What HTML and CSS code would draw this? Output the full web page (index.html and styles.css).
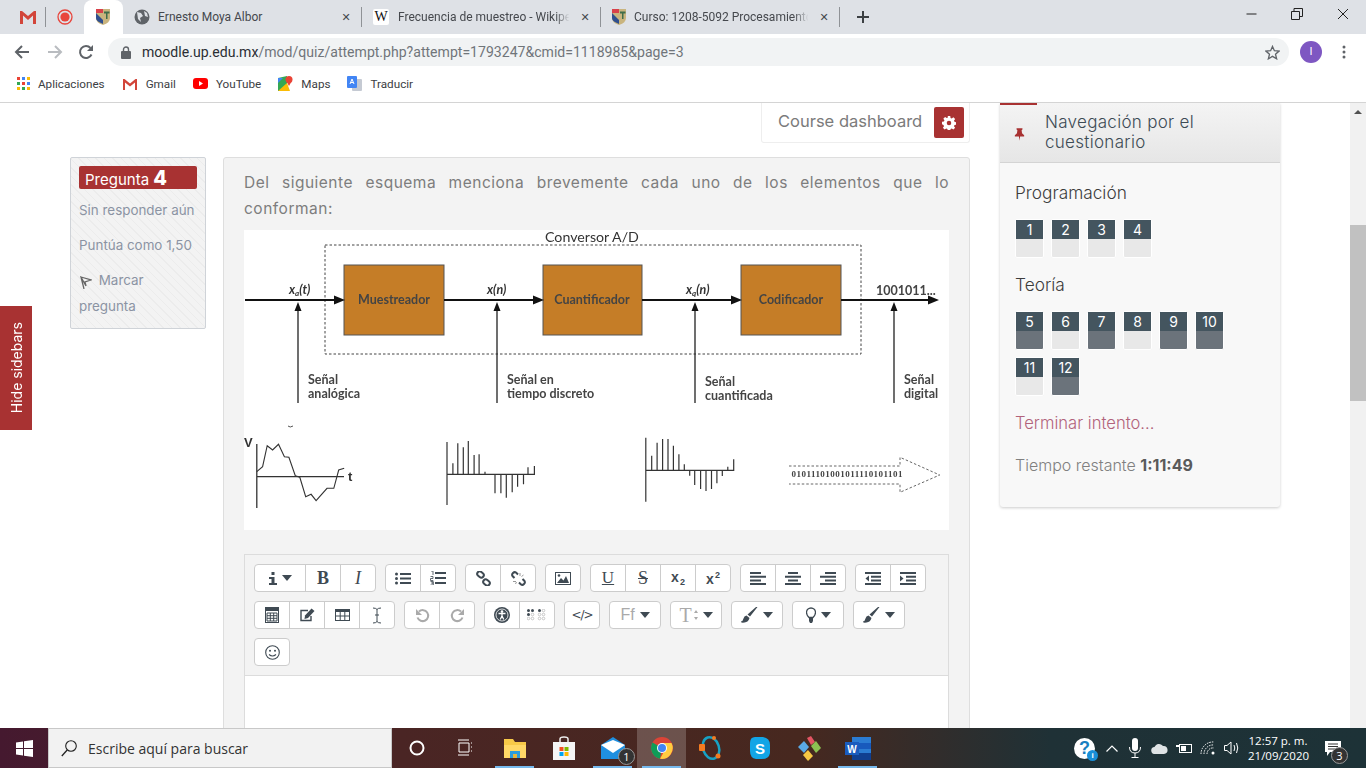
FILE: index.html
```html
<!DOCTYPE html>
<html lang="es">
<head>
    <meta charset="UTF-8">
    <title>Moodle quiz attempt</title>
    <link rel="stylesheet" href="styles.css">
</head>
<body>

    <!-- Browser tabs -->
    <div class="tabbar">
        <div class="tab pinned">
            <svg width="18" height="14" viewBox="0 0 18 14"><path d="M1 14V1h2l6 5 6-5h2v13h-3V5.500L9 10 4 5.500V14z" fill="#d2453a"/></svg>
        </div>
        <div class="tab pinned rec">
            <svg width="16" height="16" viewBox="0 0 16 16"><circle cx="8" cy="8" r="7" fill="none" stroke="#e8453c" stroke-width="1.300"/><circle cx="8" cy="8" r="4.600" fill="#e8453c"/></svg>
        </div>
        <div class="tab active">
            <svg width="14" height="16" viewBox="0 0 14 16"><path d="M0 0h14v9q0 5-7 7-7-2-7-7z" fill="#c9b47e"/><path d="M0 0h7v4H0z" fill="#d8414a"/><path d="M0 4l7 7v4L5 14Q0 12 0 9z" fill="#2f4f8f"/><path d="M10 4h1.500v6H10zM8 2.500h5.500V4.500H8z" fill="#3f6d4a"/></svg>
        </div>
        <div class="tab">
            <svg class="favicon" width="16" height="16" viewBox="0 0 16 16"><circle cx="8" cy="8" r="7.500" fill="#5f6368"/><path d="M3 3l4 1 2 3-3 2 1 4-3-3zM10 2l3 2 1 4-3-1z" fill="#dee1e6"/></svg>
            <span class="tab-title">Ernesto Moya Albor</span>
            <span class="tab-close">✕</span>
        </div>
        <div class="tab">
            <span class="favicon wiki">W</span>
            <span class="tab-title fade">Frecuencia de muestreo - Wikipe</span>
            <span class="tab-close">✕</span>
        </div>
        <div class="tab">
            <svg class="favicon" width="14" height="16" viewBox="0 0 14 16"><path d="M0 0h14v9q0 5-7 7-7-2-7-7z" fill="#c9b47e"/><path d="M0 0h7v4H0z" fill="#d8414a"/><path d="M0 4l7 7v4L5 14Q0 12 0 9z" fill="#2f4f8f"/><path d="M10 4h1.500v6H10zM8 2.500h5.500V4.500H8z" fill="#3f6d4a"/></svg>
            <span class="tab-title fade">Curso: 1208-5092 Procesamiento</span>
            <span class="tab-close">✕</span>
        </div>
        <div class="new-tab">
            <svg width="12" height="12" viewBox="0 0 12 12"><path d="M6 0v12M0 6h12" stroke="#3c4043" stroke-width="2"/></svg>
        </div>
        <div class="window-controls">
            <svg width="12" height="12" viewBox="0 0 12 12"><path d="M1.500 6h10" stroke="#222" stroke-width="1"/></svg>
            <svg width="12" height="12" viewBox="0 0 12 12"><path d="M.5 3.500h8v8h-8zM3 3.500V.5h8.500v8H8.500" fill="none" stroke="#222"/></svg>
            <svg width="12" height="12" viewBox="0 0 12 12"><path d="M1 1l10 10M11 1L1 11" stroke="#222"/></svg>
        </div>
    </div>

    <!-- Address bar -->
    <div class="toolbar">
        <svg class="nav" width="16" height="16" viewBox="0 0 16 16"><path d="M15 8H2M8 2L2 8l6 6" fill="none" stroke="#5f6368" stroke-width="2"/></svg>
        <svg class="nav" width="16" height="16" viewBox="0 0 16 16"><path d="M1 8h13M8 2l6 6-6 6" fill="none" stroke="#b9bcc0" stroke-width="2"/></svg>
        <svg class="nav" width="16" height="16" viewBox="0 0 16 16"><path d="M13.500 10.500A6 6 0 1 1 12.500 4" fill="none" stroke="#5f6368" stroke-width="2"/><path d="M15 1v6H9z" fill="#5f6368"/></svg>
        <div class="omnibox">
            <svg width="10" height="13" viewBox="0 0 10 13"><path d="M2.500 5V3.500a2.500 2.500 0 0 1 5 0V5" fill="none" stroke="#5f6368" stroke-width="1.400"/><rect y="5" width="10" height="8" rx="1" fill="#5f6368"/></svg>
            <span class="url"><b>moodle.up.edu.mx</b>/mod/quiz/attempt.php?attempt=1793247&amp;cmid=1118985&amp;page=3</span>
            <svg class="star" width="15" height="15" viewBox="0 0 16 16"><path d="M8 1.500l2 4.600 5 .4-3.800 3.300 1.200 4.900L8 12.100l-4.400 2.600 1.200-4.900L1 6.500l5-.4z" fill="none" stroke="#5f6368" stroke-width="1.400"/></svg>
        </div>
        <span class="avatar">I</span>
        <svg class="menu-dots" width="4" height="14" viewBox="0 0 4 14"><circle cx="2" cy="2" r="1.500" fill="#5f6368"/><circle cx="2" cy="7" r="1.500" fill="#5f6368"/><circle cx="2" cy="12" r="1.500" fill="#5f6368"/></svg>
    </div>

    <!-- Bookmarks -->
    <div class="bookmarks">
        <a class="mark">
            <svg width="13" height="13" viewBox="0 0 13 13"><path d="M0 0h3v3H0z" fill="#ea4335"/><path d="M5 0h3v3H5z" fill="#4285f4"/><path d="M10 0h3v3h-3z" fill="#fbbc05"/><path d="M0 5h3v3H0z" fill="#34a853"/><path d="M5 5h3v3H5z" fill="#ea4335"/><path d="M10 5h3v3h-3z" fill="#4285f4"/><path d="M0 10h3v3H0z" fill="#fbbc05"/><path d="M5 10h3v3H5z" fill="#34a853"/><path d="M10 10h3v3h-3z" fill="#fbbc05"/></svg>
            Aplicaciones
        </a>
        <a class="mark">
            <svg width="16" height="12" viewBox="0 0 16 12"><path d="M1 12V1h1.500L8 5.500 13.500 1H15v11h-2V4.500L8 8.500l-5-4V12z" fill="#d2453a"/></svg>
            Gmail
        </a>
        <a class="mark">
            <svg width="15" height="11" viewBox="0 0 15 11"><rect width="15" height="11" rx="3" fill="#f00"/><path d="M6 3l4 2.500L6 8z" fill="#fff"/></svg>
            YouTube
        </a>
        <a class="mark">
            <svg width="15" height="15" viewBox="0 0 15 15"><path d="M0 2l9-2v15H0z" fill="#34a853"/><path d="M0 15l9-8 3 8z" fill="#fbbc05"/><path d="M0 2h5L0 7z" fill="#4285f4"/><circle cx="11" cy="3.500" r="3.500" fill="#ea4335"/><path d="M8.500 5.500L11 10l2.500-4.500z" fill="#ea4335"/></svg>
            Maps
        </a>
        <a class="mark">
            <svg width="15" height="15" viewBox="0 0 15 15"><rect x="5" y="3" width="10" height="12" rx="1" fill="#c5cad3"/><rect width="10" height="12" rx="1" fill="#4285f4"/><path d="M3 8l2-5 2 5M3.800 6.500h2.400" fill="none" stroke="#fff"/></svg>
            Traducir
        </a>
    </div>

    <!-- Moodle page -->
    <div class="viewport">
        <div class="page">
            <div class="page-main">
                <div class="dashboard-row">
                    <div class="dashboard">
                        <span>Course dashboard</span>
                        <span class="gear-btn">
                            <svg width="14" height="14" viewBox="0 0 16 16"><path d="M6.600 0h2.800l.4 2.200 1.300.6 1.900-1.300 2 2-1.300 1.900.6 1.300 2.200.4v2.800l-2.200.4-.6 1.300 1.300 1.900-2 2-1.900-1.300-1.300.6-.4 2.200H6.600l-.4-2.200-1.300-.6-1.900 1.300-2-2 1.300-1.900-.6-1.300L0 9.400V6.600l2.200-.4.6-1.300-1.300-1.900 2-2 1.900 1.300 1.300-.6z" fill="#fff"/><circle cx="8" cy="8" r="2.600" fill="#a83232"/></svg>
                        </span>
                    </div>
                </div>
                <div class="question">
                    <div class="info">
                        <h3 class="qno">Pregunta <b>4</b></h3>
                        <p>Sin responder aún</p>
                        <p>Puntúa como 1,50</p>
                        <p class="flag">
                            <svg width="12" height="14" viewBox="0 0 12 14"><path d="M1 2l10 3-6 2 1 4zM1 2l3 12" fill="none" stroke="#666" stroke-width="1.300"/></svg>
                            Marcar pregunta
                        </p>
                    </div>
                    <div class="content">
                        <p class="qtext">Del siguiente esquema menciona brevemente cada uno de los elementos que lo conforman:</p>

                        <svg class="diagram" width="705" height="300" viewBox="0 0 705 300">
                            <rect x="81" y="15" width="536" height="109" fill="none" stroke="#444" stroke-dasharray="2.500 2"/>
                            <text class="lbl title" x="301" y="12">Conversor A/D</text>

                            <rect class="block" x="100" y="35" width="100" height="70"/>
                            <rect class="block" x="299" y="35" width="99" height="70"/>
                            <rect class="block" x="497" y="35" width="100" height="70"/>
                            <text class="lbl bold" x="150" y="74" text-anchor="middle">Muestreador</text>
                            <text class="lbl bold" x="348" y="74" text-anchor="middle">Cuantificador</text>
                            <text class="lbl bold" x="547" y="74" text-anchor="middle">Codificador</text>

                            <!-- signal line and the arrows into it -->
                            <path d="M1 70h94M200 70h93M398 70h93M597 70h92" stroke="#111" stroke-width="2" fill="none"/>
                            <path d="M90 65.500l11 4.500-11 4.500zM289 65.500l11 4.500-11 4.500zM487 65.500l11 4.500-11 4.500zM684 65.500l11 4.500-11 4.500z" fill="#111"/>
                            <path d="M54 79v94M253 79v94M451 79v94M650 79v94" stroke="#222" stroke-width="1.300" fill="none"/>
                            <path d="M50.500 81l3.500-9 3.500 9zM249.500 81l3.500-9 3.500 9zM447.500 81l3.500-9 3.500 9zM646.500 81l3.500-9 3.500 9z" fill="#111"/>

                            <text class="lbl it" x="45" y="64">x<tspan font-size="8" dy="2">a</tspan><tspan dy="-2">(t)</tspan></text>
                            <text class="lbl it" x="243" y="64">x(n)</text>
                            <text class="lbl it" x="442" y="64">x<tspan font-size="8" dy="2">q</tspan><tspan dy="-2">(n)</tspan></text>
                            <text class="lbl bold" x="632" y="65">1001011...</text>

                            <text class="lbl bold" x="64" y="154">Señal</text>
                            <text class="lbl bold" x="64" y="168">analógica</text>
                            <text class="lbl bold" x="263" y="154">Señal en</text>
                            <text class="lbl bold" x="263" y="168">tiempo discreto</text>
                            <text class="lbl bold" x="461" y="156">Señal</text>
                            <text class="lbl bold" x="461" y="170">cuantificada</text>
                            <text class="lbl bold" x="660" y="154">Señal</text>
                            <text class="lbl bold" x="660" y="168">digital</text>

                            <!-- analog waveform -->
                            <path d="M44 196q2 2 5 0" fill="none" stroke="#555"/>
                            <path d="M12.800 214v64M12.800 246.700H100" stroke="#333" stroke-width="1.300" fill="none"/>
                            <polyline points="12.800,241.700 18.600,236.700 23.200,215.700 28.600,220 34.500,214.300 40.400,226.700 44.900,227.300 51.300,245.700 55.800,247.300 61.700,266.700 67.100,264.300 72.100,270.700 83,258.300 89.800,258.300 94.700,240 100.200,238.300" fill="none" stroke="#333" stroke-width="1.100"/>
                            <text class="axis" x="0" y="217">V</text>
                            <text class="axis" x="104" y="251">t</text>

                            <!-- sampled signal -->
                            <path d="M203 212v63M203 244.300H290.400V236M208.900 244.300V233.300M213.800 244.300V213.300M219.300 244.300V217.300M224.300 244.300V211M230.100 244.300V225M235.100 244.300V224.300M241 244.300V241.700M251 244.300V263.300M256.900 244.300V263.300M262.300 244.300V267.700M268.200 244.300V262.300M273.600 244.300V256.700M279.500 244.300V254.300M284 244.300V237.300" fill="none" stroke="#333" stroke-width="1.200"/>

                            <!-- quantized signal -->
                            <path d="M401.800 207.700v64M401.800 240.300H489.700V229.300M407.700 240.300V225.700M413.100 240.300V212.700M418.600 240.300V209M424 240.300V209M429.400 240.300V215.700M434.900 240.300V224.300M440.300 240.300V234.300M445.700 240.300V245.700M450.700 240.300V255M456.600 240.300V259M462 240.300V261M467.500 240.300V259M472.900 240.300V253.300M478.300 240.300V246M483.800 240.300V236.700" fill="none" stroke="#333" stroke-width="1.200"/>

                            <!-- bit stream arrow -->
                            <path d="M545 236H656V227.300L695.700 245 656 262.300V254H545" fill="none" stroke="#666" stroke-dasharray="2.500 2"/>
                            <text class="bits" x="547.500" y="247" textLength="111">01011101001011110101101</text>
                        </svg>

                        <div class="editor">
                            <div class="editor-tools">
                                <div class="tool-row">
                                    <div class="group">
                                        <span class="btn drop">
                                            <svg width="8" height="13" viewBox="0 0 8 13"><path d="M2.500 0h3v3h-3zM0 5h5.500v6H8v2H0v-2h2.500V7H0z" fill="#3f4a53"/></svg>
                                            <i class="caret"></i>
                                        </span>
                                        <span class="btn"><span class="serif bold">B</span></span>
                                        <span class="btn"><span class="serif ital">I</span></span>
                                    </div>
                                    <div class="group">
                                        <span class="btn">
                                            <svg width="16" height="13" viewBox="0 0 16 13"><path d="M5 1h11v2H5zM5 5.500h11v2H5zM5 10h11v2H5z" fill="#3f4a53"/><circle cx="1.500" cy="2" r="1.500" fill="#3f4a53"/><circle cx="1.500" cy="6.500" r="1.500" fill="#3f4a53"/><circle cx="1.500" cy="11" r="1.500" fill="#3f4a53"/></svg>
                                        </span>
                                        <span class="btn">
                                            <svg width="16" height="14" viewBox="0 0 16 14"><path d="M5 1h11v2H5zM5 6h11v2H5zM5 11h11v2H5z" fill="#3f4a53"/><path d="M1 0h2v4M.5 5.500h2.500v2H.5v2h2.800M.5 10.500h2.800v1.500H1.500h1.800v2H.5" fill="none" stroke="#3f4a53" stroke-width=".8"/></svg>
                                        </span>
                                    </div>
                                    <div class="group">
                                        <span class="btn">
                                            <svg width="15" height="15" viewBox="0 0 15 15"><g fill="none" stroke="#3f4a53" stroke-width="2"><rect x="1" y="1" width="7" height="5" rx="2.500" transform="rotate(40 4.500 3.500)"/><rect x="7" y="9" width="7" height="5" rx="2.500" transform="rotate(40 10.500 11.500)"/></g></svg>
                                        </span>
                                        <span class="btn">
                                            <svg width="15" height="15" viewBox="0 0 15 15"><g fill="none" stroke="#3f4a53" stroke-width="2"><path d="M7 3.500L5 1.500Q3.500.5 2 2T1.500 5L3.500 7"/><path d="M8 11.500l2 2q1.500 1 3-.5t.5-3L11.500 8"/></g><path d="M9 2v3M12.500 4l-2 1.500M2 10.500h3M4.500 13l1-2" stroke="#999"/></svg>
                                        </span>
                                    </div>
                                    <div class="group">
                                        <span class="btn">
                                            <svg width="16" height="13" viewBox="0 0 16 13"><rect x=".5" y=".5" width="15" height="12" fill="none" stroke="#3f4a53"/><path d="M2 11l4-5 2.500 2.500L11 4l3 7z" fill="#3f4a53"/><circle cx="4" cy="3.500" r="1.300" fill="#3f4a53"/></svg>
                                        </span>
                                    </div>
                                    <div class="group">
                                        <span class="btn"><span class="serif under">U</span></span>
                                        <span class="btn"><span class="serif strike">S</span></span>
                                        <span class="btn"><span class="sub-sup">x<sub>2</sub></span></span>
                                        <span class="btn"><span class="sub-sup">x<sup>2</sup></span></span>
                                    </div>
                                    <div class="group">
                                        <span class="btn">
                                            <svg width="16" height="13" viewBox="0 0 16 13"><path d="M0 0h11v2H0zM0 3.700h16v2H0zM0 7.400h11v2H0zM0 11h16v2H0z" fill="#3f4a53"/></svg>
                                        </span>
                                        <span class="btn">
                                            <svg width="16" height="13" viewBox="0 0 16 13"><path d="M3 0h10v2H3zM0 3.700h16v2H0zM3 7.400h10v2H3zM0 11h16v2H0z" fill="#3f4a53"/></svg>
                                        </span>
                                        <span class="btn">
                                            <svg width="16" height="13" viewBox="0 0 16 13"><path d="M5 0h11v2H5zM0 3.700h16v2H0zM5 7.400h11v2H5zM0 11h16v2H0z" fill="#3f4a53"/></svg>
                                        </span>
                                    </div>
                                    <div class="group">
                                        <span class="btn">
                                            <svg width="16" height="13" viewBox="0 0 16 13"><path d="M0 0h16v2H0zM6 3.700h10v2H6zM6 7.400h10v2H6zM0 11h16v2H0z" fill="#3f4a53"/><path d="M4 3.500v6l-3.500-3z" fill="#3f4a53"/></svg>
                                        </span>
                                        <span class="btn">
                                            <svg width="16" height="13" viewBox="0 0 16 13"><path d="M0 0h16v2H0zM6 3.700h10v2H6zM6 7.400h10v2H6zM0 11h16v2H0z" fill="#3f4a53"/><path d="M0 3.500v6l3.500-3z" fill="#3f4a53"/></svg>
                                        </span>
                                    </div>
                                </div>
                                <div class="tool-row">
                                    <div class="group">
                                        <span class="btn">
                                            <svg width="14" height="16" viewBox="0 0 14 16"><rect x=".5" y=".5" width="13" height="15" fill="none" stroke="#3f4a53"/><path d="M0 0h14v4H0z" fill="#3f4a53"/><path d="M2 6h10v8H2zM5.300 6v8M8.700 6v8M2 8.700h10M2 11.300h10" fill="none" stroke="#3f4a53"/></svg>
                                        </span>
                                        <span class="btn">
                                            <svg width="15" height="14" viewBox="0 0 15 14"><path d="M11 8v4.500H1v-10h7" fill="none" stroke="#3f4a53" stroke-width="1.400"/><path d="M5 7.500L11.500.5l3 2.500L8 10l-3.500 1z" fill="#3f4a53"/></svg>
                                        </span>
                                        <span class="btn">
                                            <svg width="15" height="12" viewBox="0 0 15 12"><rect x=".5" y=".5" width="14" height="11" fill="none" stroke="#3f4a53"/><path d="M0 0h15v3H0z" fill="#3f4a53"/><path d="M5.200 3v9M9.800 3v9M0 7h15" stroke="#3f4a53"/></svg>
                                        </span>
                                        <span class="btn">
                                            <svg width="10" height="17" viewBox="0 0 10 17"><path d="M1 1q3 0 4 1.500Q6 1 9 1M1 16q3 0 4-1.500Q6 16 9 16M5 2.500v12M3 8h4" fill="none" stroke="#3f4a53"/></svg>
                                        </span>
                                    </div>
                                    <div class="group">
                                        <span class="btn">
                                            <svg width="15" height="15" viewBox="0 0 15 15"><path d="M4 3.500a5.500 5.500 0 1 1-1.500 6" fill="none" stroke="#aaa" stroke-width="2"/><path d="M1 1v6h6z" fill="#aaa"/></svg>
                                        </span>
                                        <span class="btn">
                                            <svg width="15" height="15" viewBox="0 0 15 15"><path d="M11 3.500a5.500 5.500 0 1 0 1.500 6" fill="none" stroke="#aaa" stroke-width="2"/><path d="M14 1v6H8z" fill="#aaa"/></svg>
                                        </span>
                                    </div>
                                    <div class="group">
                                        <span class="btn">
                                            <svg width="16" height="16" viewBox="0 0 16 16"><circle cx="8" cy="8" r="8" fill="#3f4a53"/><circle cx="8" cy="8" r="6" fill="none" stroke="#fff" stroke-width=".8"/><circle cx="8" cy="4.600" r="1.300" fill="#fff"/><path d="M4.500 6.500h7M8 6.500V9M8 9l-1.800 3.500M8 9l1.800 3.500" stroke="#fff" stroke-width="1.300" fill="none"/></svg>
                                        </span>
                                        <span class="btn">
                                            <svg width="20" height="13" viewBox="0 0 20 13"><g fill="#3f4a53"><circle cx="1.500" cy="1.500" r="1.500"/><circle cx="5.500" cy="1.500" r="1.500"/><circle cx="1.500" cy="5.500" r="1.500"/><circle cx="12.500" cy="1.500" r="1.500"/></g><g fill="none" stroke="#bbb" stroke-width=".8"><circle cx="5.500" cy="5.500" r="1.300"/><circle cx="1.500" cy="9.500" r="1.300"/><circle cx="5.500" cy="9.500" r="1.300"/><circle cx="16.500" cy="1.500" r="1.300"/><circle cx="12.500" cy="5.500" r="1.300"/><circle cx="16.500" cy="5.500" r="1.300"/><circle cx="12.500" cy="9.500" r="1.300"/><circle cx="16.500" cy="9.500" r="1.300"/></g></svg>
                                        </span>
                                    </div>
                                    <div class="group">
                                        <span class="btn code">&lt;/&gt;</span>
                                    </div>
                                    <div class="group">
                                        <span class="btn drop muted"><span class="ff">Ff</span><i class="caret"></i></span>
                                    </div>
                                    <div class="group">
                                        <span class="btn drop muted"><span class="serif size">T</span><svg width="4" height="10" viewBox="0 0 4 10"><path d="M2 0l2 3H0zM2 10l2-3H0z" fill="#aaa"/></svg><i class="caret"></i></span>
                                    </div>
                                    <div class="group">
                                        <span class="btn drop">
                                            <svg width="17" height="16" viewBox="0 0 17 16"><path d="M16.500 0L9 9.500 6.500 7.500 15 0zM5.500 8.500l3 2.500q-1 4-5 4.500T0 14.500q2-.5 2.500-3t3-3z" fill="#3f4a53"/></svg>
                                            <i class="caret"></i>
                                        </span>
                                    </div>
                                    <div class="group">
                                        <span class="btn drop">
                                            <svg width="10" height="16" viewBox="0 0 10 16"><path d="M3 10.500Q.500 8 .5 5.500a4.500 4.500 0 0 1 9 0Q9.500 8 7 10.500z" fill="none" stroke="#3f4a53" stroke-width="1.300"/><path d="M3 11h4v3l-1 2H4l-1-2z" fill="#3f4a53"/></svg>
                                            <i class="caret"></i>
                                        </span>
                                    </div>
                                    <div class="group">
                                        <span class="btn drop">
                                            <svg width="17" height="16" viewBox="0 0 17 16"><path d="M16.500 0L9 9.500 6.500 7.500 15 0zM5.500 8.500l3 2.500q-1 4-5 4.500T0 14.500q2-.5 2.500-3t3-3z" fill="#3f4a53"/></svg>
                                            <i class="caret"></i>
                                        </span>
                                    </div>
                                </div>
                                <div class="tool-row">
                                    <div class="group">
                                        <span class="btn">
                                            <svg width="15" height="15" viewBox="0 0 15 15"><circle cx="7.500" cy="7.500" r="6.800" fill="none" stroke="#3f4a53" stroke-width="1.100"/><circle cx="5" cy="5.800" r="1" fill="#3f4a53"/><circle cx="10" cy="5.800" r="1" fill="#3f4a53"/><path d="M4 9.500q3.500 3 7 0" fill="none" stroke="#3f4a53" stroke-width="1.100"/></svg>
                                        </span>
                                    </div>
                                </div>
                            </div>
                            <div class="editor-area"></div>
                        </div>
                    </div>
                </div>
            </div>

            <div class="quiznav">
                <div class="nav-head">
                    <svg class="pin" width="11" height="15" viewBox="0 0 13 15"><path d="M3 0h7v1.500L9 2.500 9.500 6 12 8.500V10H7.200L6.500 15 5.800 10H1V8.500L3.500 6 4 2.500 3 1.500z" fill="#a83232"/></svg>
                    <h3>Navegación por el cuestionario</h3>
                </div>
                <div class="nav-body">
                    <h4>Programación</h4>
                    <div class="tiles">
                        <span class="tile"><b>1</b></span>
                        <span class="tile"><b>2</b></span>
                        <span class="tile"><b>3</b></span>
                        <span class="tile"><b>4</b></span>
                    </div>
                    <h4 class="second">Teoría</h4>
                    <div class="tiles">
                        <span class="tile done"><b>5</b></span>
                        <span class="tile"><b>6</b></span>
                        <span class="tile done"><b>7</b></span>
                        <span class="tile"><b>8</b></span>
                        <span class="tile done"><b>9</b></span>
                        <span class="tile done"><b>10</b></span>
                        <span class="tile"><b>11</b></span>
                        <span class="tile done"><b>12</b></span>
                    </div>
                    <a class="finish">Terminar intento...</a>
                    <p class="timer">Tiempo restante <b>1:11:49</b></p>
                </div>
            </div>
        </div>

        <div class="hide-sidebars"><span>Hide sidebars</span></div>

        <div class="scrollbar">
            <i class="arrow"></i>
            <div class="thumb"></div>
        </div>
    </div>

    <!-- Windows taskbar -->
    <div class="taskbar">
        <div class="start">
            <svg width="17" height="17" viewBox="0 0 17 17"><path d="M0 2.400L7 1.400V8H0zM8 1.200L17 0v8H8zM0 9h7v6.600l-7-1zM8 9h9v8l-9-1.200z" fill="#fff"/></svg>
        </div>
        <div class="search">
            <svg width="16" height="17" viewBox="0 0 16 17"><circle cx="10" cy="6" r="5.300" fill="none" stroke="#222" stroke-width="1.100"/><path d="M6.200 10L.8 16" stroke="#222" stroke-width="1.300"/></svg>
            <span>Escribe aquí para buscar</span>
        </div>
        <div class="apps">
            <span class="app"><svg width="16" height="16" viewBox="0 0 16 16"><circle cx="8" cy="8" r="6.500" fill="none" stroke="#fff" stroke-width="2"/></svg></span>
            <span class="app"><svg width="16" height="18" viewBox="0 0 16 18"><path d="M1 4h10v9H1zM13 4h1M13 8h1M13 12h1M0 1h11M0 16h11" fill="none" stroke="#fff"/></svg></span>
            <span class="app open"><svg width="22" height="20" viewBox="0 0 22 20"><path d="M0 1h9l2 3h11v16H0z" fill="#f7c948"/><path d="M0 7h22v13H0z" fill="#ffd867"/><path d="M6 13h10v7H6z" fill="#2d9cdb"/><path d="M9 16h4v4H9z" fill="#e8b53a"/></svg></span>
            <span class="app"><svg width="22" height="24" viewBox="0 0 22 24"><path d="M0 6h22v18H0z" fill="#f5f5f5"/><path d="M7 6V3q0-2 4-2t4 2v3" fill="none" stroke="#eee" stroke-width="1.500"/><path d="M6.500 11h4v4h-4z" fill="#f25022"/><path d="M11.500 11h4v4h-4z" fill="#7fba00"/><path d="M6.500 16h4v4h-4z" fill="#00a4ef"/><path d="M11.500 16h4v4h-4z" fill="#ffb900"/></svg></span>
            <span class="app open"><svg width="24" height="22" viewBox="0 0 24 22"><path d="M0 8L12 0l12 8v14H0z" fill="#1f8fe0"/><path d="M0 8l12 8 12-8-12-5z" fill="#fff"/></svg><i class="count">1</i></span>
            <span class="app open current"><svg width="22" height="22" viewBox="0 0 22 22"><circle cx="11" cy="11" r="11" fill="#db4437"/><path d="M11 11L1.500 5.500A11 11 0 0 0 9 21.800z" fill="#0f9d58"/><path d="M11 6h9.500A11 11 0 0 1 9 21.800L15 11z" fill="#ffcd40"/><circle cx="11" cy="11" r="5" fill="#fff"/><circle cx="11" cy="11" r="4" fill="#4285f4"/></svg></span>
            <span class="app"><svg width="24" height="26" viewBox="0 0 24 26"><ellipse cx="12" cy="13" rx="8" ry="11" fill="none" stroke="#17a2c4" stroke-width="2.500" transform="rotate(-18 12 13)"/><rect y="9" width="6" height="7" rx="1" fill="#f47b20"/><circle cx="19" cy="21" r="2.500" fill="#f47b20"/><circle cx="15" cy="3" r="2" fill="#f47b20"/></svg></span>
            <span class="app"><svg width="22" height="24" viewBox="0 0 22 24"><path d="M6 1h8q7 1 7 8v8q-1 6-8 6H7q-6-1-6-8V7q0-6 5-6z" fill="#12a5e6"/><text x="11" y="17.500" class="skype">S</text></svg></span>
            <span class="app"><svg width="24" height="26" viewBox="0 0 24 26"><path d="M1 12l6-6 5 6-5 6z" fill="#5aa9e6"/><path d="M10 3l4-2 4 6-4 3z" fill="#e25563"/><path d="M14 11l5-5 5 7-5 5z" fill="#8cc152"/><path d="M6 20l5-5 5 6-5 5z" fill="#f6c744"/></svg></span>
            <span class="app open"><svg width="26" height="23" viewBox="0 0 26 23"><path d="M7 0h19v23H7z" fill="#2b7cd3"/><path d="M7 6h19v6H7z" fill="#185abd"/><path d="M7 16h19v7H7z" fill="#103f91"/><rect y="5" width="14" height="13" fill="#1a5cbe"/><text x="7" y="15.500" class="word">W</text></svg></span>
        </div>
        <div class="tray">
            <span class="help">?<i>i</i></span>
            <svg class="tray-up" width="12" height="7" viewBox="0 0 12 7"><path d="M.5 6.500L6 1l5.500 5.500" fill="none" stroke="#fff" stroke-width="1.200"/></svg>
            <svg class="tray-mic" width="12" height="20" viewBox="0 0 12 20"><rect x="3" width="6" height="13" rx="3" fill="#fff"/><path d="M.5 9q0 6 5.500 6t5.500-6M6 15v4M2.500 19.500h7" fill="none" stroke="#fff"/></svg>
            <svg width="17" height="11" viewBox="0 0 17 11"><path d="M4 11a3.500 3.500 0 0 1-.5-7A5 5 0 0 1 12 3a4 4 0 0 1 1 8z" fill="#dfe3e5"/></svg>
            <svg width="16" height="12" viewBox="0 0 16 12"><rect x="3.500" y="2.500" width="12" height="8" fill="none" stroke="#fff"/><path d="M5 4h5v5H5zM1 0v3M3 0v3M0 3h4v2H0z" fill="#fff"/></svg>
            <svg width="16" height="14" viewBox="0 0 16 14"><path d="M1 13a12 12 0 0 1 13-12M4 13a9 9 0 0 1 10-9M7 13a6 6 0 0 1 7-6" fill="none" stroke="#fff" stroke-dasharray="1.500 1"/><circle cx="13" cy="12" r="1.500" fill="#fff"/></svg>
            <svg width="16" height="14" viewBox="0 0 16 14"><path d="M.5 4.500H3L7 1v12L3 9.500H.5zM10 4q1.500 3 0 6M12.500 2q2.500 5 0 10" fill="none" stroke="#fff"/></svg>
            <div class="clock"><span>12:57 p. m.</span><span>21/09/2020</span></div>
            <span class="notify">
                <svg width="16" height="15" viewBox="0 0 16 15"><path d="M0 0h16v11H5l-3 4v-4H0z" fill="#fff"/><path d="M3 3h10M3 5.500h10M3 8h7" stroke="#333"/></svg>
                <i class="count">3</i>
            </span>
        </div>
    </div>

</body>
</html>
```

FILE: styles.css
```css
* {
    box-sizing: border-box;
}
body {
    margin: 0;
    width: 1366px;
    height: 768px;
    overflow: hidden;
    display: flex;
    flex-direction: column;
    font-family: "Segoe UI", Roboto, sans-serif;
    background: #fff;
}
svg {
    display: block;
    flex: none;
}

/* tabs */
.tabbar {
    height: 34px;
    background: #dee1e6;
    display: flex;
    align-items: stretch;
    flex: none;
}
.tab {
    width: 239px;
    display: flex;
    align-items: center;
    padding: 0 8px 0 11px;
    position: relative;
    font-size: 12px;
    color: #45484d;
    font-family: Roboto, sans-serif;
}
.tab::after {
    content: "";
    position: absolute;
    right: 0;
    top: 7px;
    height: 20px;
    width: 1px;
    background: #8f9296;
}
.tab.pinned {
    width: 46px;
    padding: 0 0 0 19px;
}
.tab.pinned.rec {
    width: 38px;
    padding: 0 0 0 11px;
}
.tab.pinned.rec::after,
.tab.active::after {
    display: none;
}
.tab.active {
    width: 39px;
    padding: 0 0 0 12px;
    background: #fff;
    border-radius: 8px 8px 0 0;
}
.favicon {
    margin: 0 8px 0 0;
}
.wiki {
    width: 16px;
    height: 16px;
    background: #fff;
    border-radius: 2px;
    color: #111;
    font: 14px/16px "Liberation Serif", serif;
    text-align: center;
    flex: none;
    margin-right: 9px;
}
.tab-title {
    flex: 1;
    white-space: nowrap;
    overflow: hidden;
}
.tab-title.fade {
    -webkit-mask-image: linear-gradient(90deg, #000 90%, transparent 98%);
    mask-image: linear-gradient(90deg, #000 90%, transparent 98%);
}
.tab-close {
    width: 16px;
    margin-left: 4px;
    font-size: 11px;
    font-weight: bold;
    color: #45484d;
    text-align: center;
    font-family: "DejaVu Sans", sans-serif;
}
.new-tab {
    width: 46px;
    display: flex;
    align-items: center;
    justify-content: center;
}
.window-controls {
    margin-left: auto;
    width: 138px;
    padding: 0 17px;
    display: flex;
    align-items: center;
    justify-content: space-between;
    margin-top: -6px;
}

/* address bar */
.toolbar {
    height: 34px;
    display: flex;
    align-items: center;
    padding: 2px 20px 0 14px;
    flex: none;
}
.nav {
    margin-right: 17px;
}
.toolbar .nav:nth-child(2) {
    margin-right: 15px;
}
.toolbar .nav:nth-child(3) {
    margin-right: 14px;
}
.omnibox {
    width: 1182px;
    height: 28px;
    border-radius: 14px;
    background: #f1f3f4;
    display: flex;
    align-items: center;
    padding: 0 9px 0 13px;
}
.url {
    margin-left: 11px;
    font: 14.070px Roboto, sans-serif;
    color: #70757a;
    white-space: nowrap;
}
.url b {
    font-weight: normal;
    color: #2a2e33;
}
.star {
    margin-left: auto;
}
.avatar {
    width: 22px;
    height: 22px;
    margin-left: 11px;
    border-radius: 50%;
    background: #7e57c2;
    color: #fff;
    font-size: 11px;
    line-height: 22px;
    text-align: center;
}
.menu-dots {
    margin-left: 20px;
}

/* bookmarks */
.bookmarks {
    height: 35px;
    display: flex;
    align-items: center;
    padding: 0 0 3px 17px;
    gap: 17px;
    border-bottom: 1px solid #d4d4d4;
    flex: none;
}
.mark {
    display: flex;
    align-items: center;
    gap: 8px;
    font: 11.700px Roboto, sans-serif;
    color: #3c4043;
}

/* page */
.viewport {
    flex: 1;
    position: relative;
    overflow: hidden;
    min-height: 0;
    font-family: Inter, sans-serif;
}
.page {
    display: flex;
    align-items: flex-start;
    padding-left: 70px;
}
.page-main {
    width: 900px;
}
.dashboard-row {
    display: flex;
    justify-content: flex-end;
    height: 54px;
}
.dashboard {
    width: 209px;
    height: 40px;
    border: 1px solid #eee;
    border-top: 0;
    border-radius: 0 0 3px 3px;
    padding: 4px 5px 0 16px;
    display: flex;
    align-items: flex-start;
    justify-content: space-between;
    font-size: 16.500px;
    color: #7b7b7b;
    line-height: 28px;
}
.gear-btn {
    width: 30px;
    height: 31px;
    border-radius: 2px;
    background: #a83232;
    display: flex;
    align-items: center;
    justify-content: center;
}
.question {
    display: flex;
    align-items: flex-start;
    gap: 17px;
}
.info {
    width: 136px;
    height: 172px;
    padding: 8px;
    border: 1px solid #cfd3d8;
    border-radius: 2px;
    background: repeating-linear-gradient(45deg, #f3f3f3, #f3f3f3 5px, #ececec 5px, #ececec 6px);
    font-size: 13.400px;
    color: #8b93a3;
}
.info p {
    margin: 0 0 9px;
    line-height: 26px;
}
.qno {
    margin: 0 0 8px;
    height: 23px;
    border-radius: 2px;
    background: #a83232;
    color: #fff;
    font-size: 15px;
    font-weight: normal;
    line-height: 24px;
    padding-left: 6px;
}
.qno b {
    font-size: 20px;
    font-weight: 800;
}
.flag svg {
    display: inline-block;
    margin: 0 3px 0 1px;
    vertical-align: -4px;
}
.content {
    width: 747px;
    height: 600px;
    padding: 12px 20px 0;
    border: 1px solid #dedede;
    border-radius: 3px 3px 0 0;
    background: #f3f3f3;
}
.qtext {
    margin: 0 0 8px;
    font-size: 15.500px;
    letter-spacing: .5px;
    line-height: 26px;
    color: #7d7d7d;
    text-align: justify;
}
.diagram {
    display: block;
    background: #fff;
    width: 705px;
    height: 300px;
    filter: blur(.5px);
}
.lbl {
    font-family: Lato, sans-serif;
    font-size: 12.500px;
    fill: #333;
}
.lbl.title {
    font-size: 14.200px;
}
.lbl.bold {
    font-weight: bold;
    fill: #444;
}
.lbl.it {
    font-style: italic;
    font-weight: bold;
}
.block {
    fill: #c57d27;
    stroke: #555;
    stroke-width: 1;
}
.axis {
    font: bold 13px "Liberation Sans", sans-serif;
    fill: #333;
}
.bits {
    font: bold 9px "Liberation Serif", serif;
    fill: #444;
}

/* editor */
.editor {
    margin-top: 24px;
    border: 1px solid #dcdcdc;
    border-bottom: 0;
}
.editor-tools {
    padding: 9px;
    display: flex;
    flex-direction: column;
    gap: 9px;
}
.tool-row {
    display: flex;
    gap: 9px;
    height: 28px;
}
.group {
    display: flex;
    background: #fff;
    border: 1px solid #ccc;
    border-radius: 4px;
}
.btn {
    width: 35px;
    display: flex;
    align-items: center;
    justify-content: center;
    gap: 5px;
    color: #3f4a53;
    border-left: 1px solid #ccc;
}
.btn:first-child {
    width: 34px;
    border-left: 0;
}
.btn.drop {
    width: 50px;
}
.btn.muted {
    color: #aaa;
}
.caret {
    width: 0;
    height: 0;
    border: 5px solid transparent;
    border-top: 6px solid #3f4a53;
    border-bottom: 0;
}
.serif {
    font: 18px "Liberation Serif", serif;
}
.serif.bold {
    font-weight: bold;
}
.serif.ital {
    font-style: italic;
}
.serif.under {
    text-decoration: underline;
    font-size: 17px;
}
.serif.strike {
    text-decoration: line-through;
    font-size: 18px;
}
.serif.size {
    font-size: 20px;
    margin-right: -3px;
}
.sub-sup {
    font: bold 14px "Liberation Sans", sans-serif;
}
.sub-sup sub,
.sub-sup sup {
    font-size: 9px;
    margin-left: 1px;
}
.code {
    font: 12px "DejaVu Sans", sans-serif;
    letter-spacing: -1px;
}
.ff {
    font: 16px "Liberation Sans", sans-serif;
}
.editor-area {
    height: 120px;
    background: #fff;
    border-top: 1px solid #dcdcdc;
}

/* quiz navigation block */
.quiznav {
    width: 280px;
    margin-left: 30px;
    background: #f8f8f8;
    box-shadow: 0 1px 3px rgba(0, 0, 0, .2);
    border-radius: 0 0 3px 3px;
}
.nav-head {
    height: 60px;
    position: relative;
    padding: 0 0 2px 14px;
    display: flex;
    align-items: center;
    gap: 20px;
    background: linear-gradient(#f4f4f4, #e6e6e6);
    border-bottom: 1px solid #d4d4d4;
}
.nav-head::before {
    content: "";
    position: absolute;
    left: 0;
    top: 0;
    width: 37px;
    height: 2px;
    background: #a83232;
}
.nav-head h3 {
    margin: 0;
    font-size: 17px;
    letter-spacing: .3px;
    font-weight: 300;
    line-height: 20px;
    color: #3d4b55;
    width: 200px;
}
.pin {
    margin-top: 5px;
}
.nav-body {
    padding: 19px 15px 32px;
    height: 344px;
}
.nav-body h4 {
    margin: 0 0 15px;
    font-size: 17.300px;
    font-weight: 300;
    line-height: 22px;
    color: #3c3c3c;
}
.nav-body h4.second {
    margin-top: 16px;
}
.tiles {
    display: flex;
    flex-wrap: wrap;
    gap: 7px;
    width: 230px;
}
.tile {
    width: 29px;
    height: 39px;
    background: #e8e8e8;
    border: 1px solid #fff;
    border-radius: 2px;
    color: #fff;
    font-size: 14px;
    text-align: center;
}
.tile b {
    display: block;
    height: 19px;
    background: #44555f;
    font-weight: normal;
    line-height: 19px;
}
.tile.done {
    background: #6b737b;
}
.finish {
    display: block;
    margin-top: 17px;
    font-size: 16.600px;
    font-weight: 300;
    line-height: 20px;
    color: #b2637b;
}
.timer {
    margin: 22px 0 0;
    font-size: 16px;
    font-weight: 300;
    line-height: 20px;
    color: #808080;
}
.timer b {
    font-weight: bold;
    color: #5a5a5a;
}

/* floats over the page */
.hide-sidebars {
    position: absolute;
    left: 0;
    top: 203px;
    width: 32px;
    height: 124px;
    background: #a83232;
    color: #fff;
    display: flex;
    align-items: center;
    justify-content: center;
    font-size: 14px;
}
.hide-sidebars span {
    writing-mode: vertical-rl;
    transform: rotate(180deg);
    white-space: nowrap;
}
.scrollbar {
    position: absolute;
    right: 0;
    top: 0;
    bottom: 0;
    width: 16px;
    background: #f1f1f1;
}
.scrollbar .arrow {
    position: absolute;
    left: 4px;
    top: 7px;
    border: 4px solid transparent;
    border-bottom: 4px solid #505050;
    border-top: 0;
}
.scrollbar .thumb {
    position: absolute;
    left: 0;
    top: 122px;
    width: 16px;
    height: 176px;
    background: #c1c1c1;
}

/* taskbar */
.taskbar {
    height: 40px;
    flex: none;
    display: flex;
    align-items: stretch;
    background: linear-gradient(90deg, #45192f 0, #4a2524 400px, #47281f 800px, #1f3136 1050px, #1d3237 100%);
    font-family: "Open Sans", sans-serif;
}
.start {
    width: 48px;
    display: flex;
    align-items: center;
    justify-content: center;
}
.search {
    width: 344px;
    display: flex;
    align-items: center;
    gap: 11px;
    padding-left: 12px;
    background: #f2f2f2;
    border: 1px solid #c8c8c8;
    font-size: 14px;
    color: #333;
}
.apps {
    display: flex;
}
.app {
    width: 49px;
    display: flex;
    align-items: center;
    justify-content: center;
    position: relative;
}
.app.open::after {
    content: "";
    position: absolute;
    left: 5px;
    right: 5px;
    bottom: 0;
    height: 2px;
    background: #76b9ed;
}
.app.current {
    background: rgba(255, 255, 255, .2);
}
.count {
    position: absolute;
    right: 2px;
    bottom: 3px;
    width: 17px;
    height: 17px;
    border-radius: 50%;
    border: 1px solid #999;
    background: #333;
    color: #fff;
    font: 11px/15px "Open Sans", sans-serif;
    text-align: center;
}
.skype {
    font: bold 15px "Liberation Sans", sans-serif;
    fill: #fff;
    text-anchor: middle;
}
.word {
    font: bold 10px "Liberation Sans", sans-serif;
    fill: #fff;
    text-anchor: middle;
}
.tray {
    margin-left: auto;
    display: flex;
    align-items: center;
    gap: 8px;
    color: #fff;
    padding-right: 18px;
}
.help {
    width: 21px;
    height: 21px;
    border-radius: 50%;
    background: #fff;
    color: #1a7fc1;
    font: bold 18px/21px "Liberation Sans", sans-serif;
    text-align: center;
    position: relative;
    margin-right: 3px;
}
.help i {
    position: absolute;
    right: -3px;
    bottom: -2px;
    width: 11px;
    height: 11px;
    border-radius: 50%;
    background: #1a8fd8;
    color: #fff;
    font: bold 8px/11px "Liberation Sans", sans-serif;
}
.tray-up {
    margin-right: 3px;
}
.tray-mic {
    margin-right: 2px;
}
.clock {
    width: 60px;
    margin-right: 2px;
    display: flex;
    flex-direction: column;
    gap: 1px;
    font-size: 11.500px;
    line-height: 14px;
    text-align: center;
    white-space: nowrap;
}
.notify {
    width: 30px;
    height: 40px;
    position: relative;
    display: flex;
    align-items: center;
    justify-content: center;
}
.notify .count {
    right: 0;
    bottom: 4px;
}
```
